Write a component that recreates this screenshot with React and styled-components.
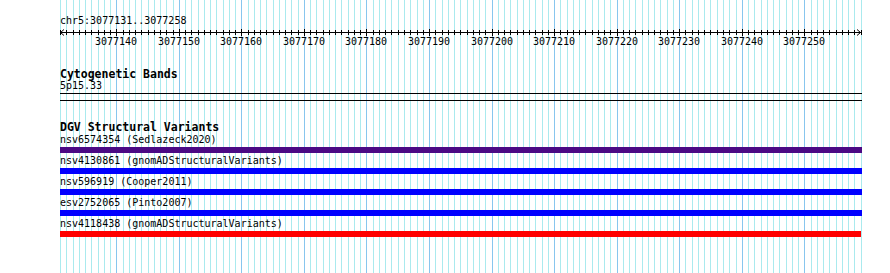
import React from "react";
import styled, { createGlobalStyle } from "styled-components";

const START = 3077131;
const END = 3077258;
const LEFT = 60;
const TRACK_W = 802;
const BASES = END - START + 1;
const STEP = 800.6 / (BASES);

const Global = createGlobalStyle`
  html, body { margin: 0; padding: 0; background: #ffffff; }
  body { font-family: "DejaVu Sans Mono", "Liberation Mono", monospace; color: #000; }
`;

const Page = styled.div`
  position: relative;
  width: 890px;
  height: 273px;
  overflow: hidden;
  background: #ffffff;
`;

const GridSvg = styled.svg`
  position: absolute;
  left: 0;
  top: 0;
  z-index: 0;
`;

const Content = styled.div`
  position: relative;
  z-index: 1;
  display: flex;
  flex-direction: column;
  padding-left: ${LEFT}px;
  width: ${TRACK_W}px;
`;

const Ruler = styled.div`
  display: flex;
  flex-direction: column;
  padding-top: 15px;
`;

const MonoText = styled.div`
  font-family: "DejaVu Sans Mono", "Liberation Mono", monospace;
  font-size: 10px;
  line-height: 12px;
  height: 12px;
  white-space: nowrap;
`;

const AxisSvg = styled.svg`
  display: block;
  overflow: visible;
`;

const LabelRow = styled.div`
  position: relative;
  height: 12px;
  margin-top: -1px;
`;

const TickLabel = styled.span`
  position: absolute;
  top: 0;
  width: 44px;
  text-align: center;
  font-size: 10px;
  line-height: 12px;
  white-space: nowrap;
`;

const Track = styled.section`
  display: flex;
  flex-direction: column;
  margin-top: ${(p) => p.$gap}px;
`;

const TrackTitle = styled.div`
  font-family: "DejaVu Sans Mono", "Liberation Mono", monospace;
  font-weight: bold;
  font-size: 11.5px;
  line-height: 12px;
  height: 12px;
  white-space: nowrap;
`;

const Band = styled.div`
  margin-top: 1px;
  height: 6px;
  border-top: 1px solid #000;
  border-bottom: 1px solid #000;
  width: ${TRACK_W}px;
`;

const Feature = styled.div`
  display: flex;
  flex-direction: column;
  padding-bottom: 1px;
`;

const FeatureLabel = styled.div`
  font-size: 10px;
  line-height: 14px;
  height: 14px;
  white-space: nowrap;
`;

const Bar = styled.div`
  height: 6px;
  width: ${(p) => p.$w}px;
  background: ${(p) => p.$color};
`;

const xAt = (i) => Math.round(i * STEP);

function Gridlines() {
  const lines = [];
  for (let i = 0; i <= BASES; i++) {
    const major = (START + i) % 10 === 0;
    const x = LEFT + xAt(i) + 0.5;
    lines.push(
      <line
        key={i}
        x1={x}
        x2={x}
        y1={0}
        y2={273}
        stroke={major ? "#88c6ee" : "#aaeaee"}
        strokeWidth="1"
      />
    );
  }
  return (
    <GridSvg width="890" height="273" shapeRendering="crispEdges">
      {lines}
    </GridSvg>
  );
}

function Axis() {
  const ticks = [];
  for (let i = 0; i <= BASES; i++) {
    const major = (START + i) % 10 === 0;
    const x = xAt(i) + 0.5;
    ticks.push(
      <line
        key={i}
        x1={x}
        x2={x}
        y1={major ? 2 : 3}
        y2={major ? 9 : 8}
        stroke="#000"
        strokeWidth="1"
      />
    );
  }
  return (
    <AxisSvg width={TRACK_W} height="10" shapeRendering="crispEdges">
      <line x1="0" x2="801" y1="5.5" y2="5.5" stroke="#000" strokeWidth="1" />
      {ticks}
      <path d="M4 2.5 L0.5 5.5 L4 8.5" fill="none" stroke="#000" strokeWidth="1" shapeRendering="auto" />
      <path d="M797 2.5 L800.5 5.5 L797 8.5" fill="none" stroke="#000" strokeWidth="1" shapeRendering="auto" />
    </AxisSvg>
  );
}

const majorLabels = [];
for (let b = START; b <= END; b++) {
  if (b % 10 === 0) majorLabels.push(b);
}

const features = [
  { id: "nsv6574354", src: "Sedlazeck2020", color: "#4b0a84", w: 802 },
  { id: "nsv4130861", src: "gnomADStructuralVariants", color: "#0000ff", w: 802 },
  { id: "nsv596919", src: "Cooper2011", color: "#0000ff", w: 802 },
  { id: "esv2752065", src: "Pinto2007", color: "#0000ff", w: 802 },
  { id: "nsv4118438", src: "gnomADStructuralVariants", color: "#ff0000", w: 801 },
];

export default function App() {
  return (
    <>
      <Global />
      <Page>
        <Gridlines />
        <Content>
          <Ruler>
            <MonoText>chr5:3077131..3077258</MonoText>
            <Axis />
            <LabelRow>
              {majorLabels.map((b) => (
                <TickLabel key={b} style={{ left: xAt(b - START) - 22 }}>
                  {b}
                </TickLabel>
              ))}
            </LabelRow>
          </Ruler>
          <Track $gap={20}>
            <TrackTitle>Cytogenetic Bands</TrackTitle>
            <MonoText>5p15.33</MonoText>
            <Band />
          </Track>
          <Track $gap={20}>
            <TrackTitle>DGV Structural Variants</TrackTitle>
            {features.map((f) => (
              <Feature key={f.id}>
                <FeatureLabel>
                  {f.id} ({f.src})
                </FeatureLabel>
                <Bar $color={f.color} $w={f.w} />
              </Feature>
            ))}
          </Track>
        </Content>
      </Page>
    </>
  );
}
